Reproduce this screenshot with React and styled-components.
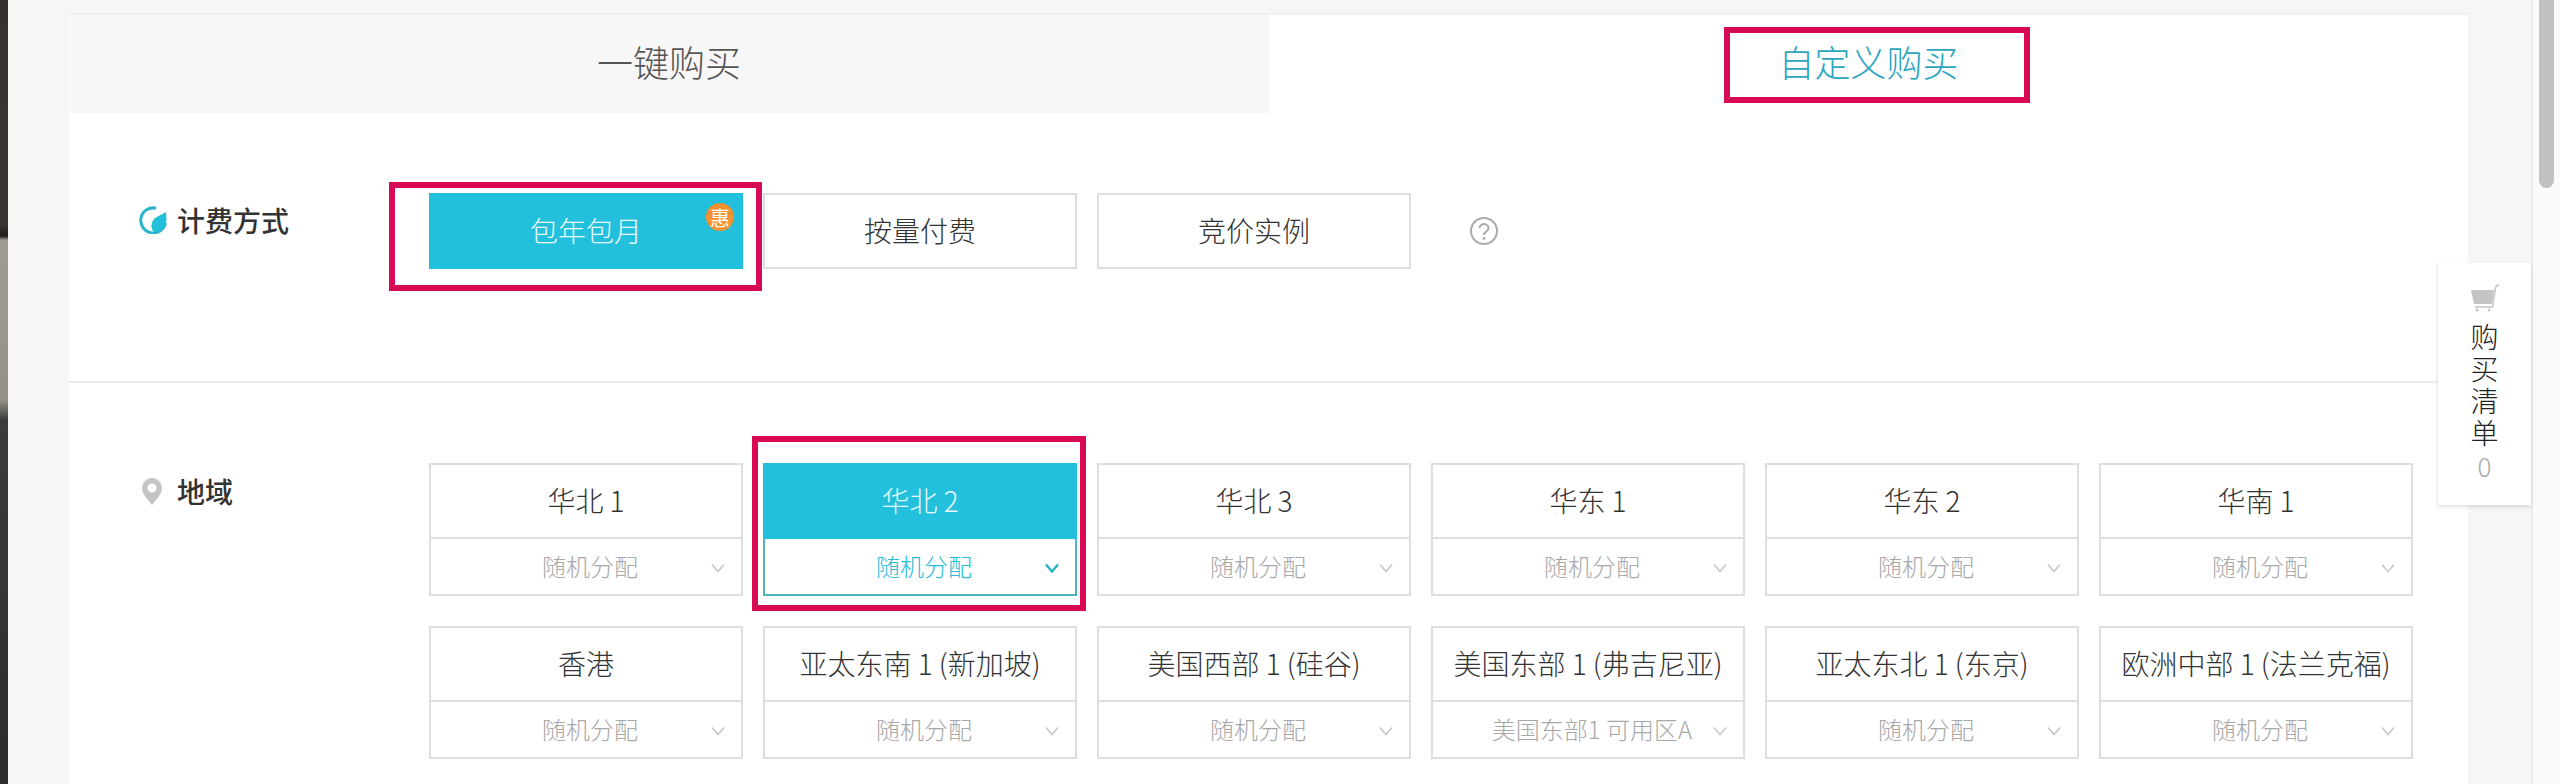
import React from 'react';
import styled, { createGlobalStyle } from 'styled-components';

const GlobalStyle = createGlobalStyle`
  html, body {
    margin: 0;
    height: 100%;
    overflow: hidden;
  }
  body {
    font-family: "Noto Sans CJK SC", "Liberation Sans", sans-serif;
    font-weight: 300;
    color: #333;
  }
`;

const Page = styled.div`
  display: flex;
  position: relative;
  height: 784px;
  overflow: hidden;
  background: #f6f6f6;
`;

const PhotoEdge = styled.div`
  flex: 0 0 8px;
  background: linear-gradient(#35322e 0, #3a3632 225px, #1f1c1a 236px, #a09b92 240px, #96918a 400px, #3c3c3c 420px, #2c2c2c 784px);
`;

const Main = styled.main`
  flex: 1;
  min-width: 0;
  padding: 13px 63px 0 61px;
`;

const Panel = styled.div`
  background: #fff;
  border-top: 2px solid #efefef;
`;

const Tabs = styled.div`
  display: grid;
  grid-template-columns: 1200px 1fr;
  height: 98px;
`;

const Tab = styled.div`
  position: relative;
  display: flex;
  align-items: center;
  justify-content: center;
  padding-bottom: 6px;
  box-sizing: border-box;
  font-size: 36px;
  color: ${(props) => (props.$active ? '#2ba6c0' : '#555')};
  background: ${(props) => (props.$active ? '#fff' : '#f7f7f7')};
`;

const Highlight = styled.div`
  position: absolute;
  top: ${(props) => props.$top}px;
  right: ${(props) => props.$right}px;
  bottom: ${(props) => props.$bottom}px;
  left: ${(props) => props.$left}px;
  border: 6px solid #d80a56;
  pointer-events: none;
`;

const Section = styled.section`
  display: flex;
  height: ${(props) => props.$height}px;
  padding-top: ${(props) => props.$top}px;
  box-sizing: border-box;
  border-bottom: ${(props) => (props.$line ? '2px solid #ededed' : 'none')};
`;

const Label = styled.div`
  flex: 0 0 360px;
  box-sizing: border-box;
  display: flex;
  align-items: center;
  align-self: flex-start;
  height: 36px;
  margin-top: ${(props) => props.$offset}px;
  padding-left: ${(props) => props.$indent}px;
  gap: ${(props) => props.$gap}px;
  font-size: 28px;
  font-weight: 500;
  color: #333;
`;

const Options = styled.div`
  display: flex;
  align-items: center;
  gap: 20px;
  height: 76px;
`;

const OptionBox = styled.div`
  position: relative;
  box-sizing: border-box;
  width: 314px;
  height: 76px;
  padding-bottom: 3px;
  display: flex;
  align-items: center;
  justify-content: center;
  font-size: 28px;
  color: ${(props) => (props.$active ? '#e8f9fc' : '#333')};
  background: ${(props) => (props.$active ? '#22c0dc' : '#fff')};
  border: ${(props) => (props.$active ? 'none' : '2px solid #dedede')};
`;

const Badge = styled.span`
  position: absolute;
  top: 10px;
  right: 9px;
  width: 28px;
  height: 28px;
  border-radius: 50%;
  display: flex;
  align-items: center;
  justify-content: center;
  font-size: 20px;
  font-weight: 400;
  color: #fff;
  background: #f2912d;
`;

const HelpIcon = styled.svg`
  width: 30px;
  height: 30px;
  margin-left: 38px;
`;

const RegionGrid = styled.div`
  display: grid;
  grid-template-columns: repeat(6, 314px);
  column-gap: 20px;
  row-gap: 30px;
  align-content: start;
`;

const RegionCard = styled.div`
  position: relative;
  box-sizing: border-box;
  height: 133px;
  display: flex;
  flex-direction: column;
`;

const RegionName = styled.div`
  flex: 0 0 76px;
  box-sizing: border-box;
  padding-bottom: 3px;
  display: flex;
  align-items: center;
  justify-content: center;
  font-size: 28px;
  white-space: pre;
  color: ${(props) => (props.$active ? '#e8f9fc' : '#333')};
  background: ${(props) => (props.$active ? '#22c0dc' : '#fff')};
  border: ${(props) => (props.$active ? 'none' : '2px solid #dedede')};
`;

const ZoneSelect = styled.div`
  flex: 1;
  position: relative;
  box-sizing: border-box;
  display: flex;
  align-items: center;
  justify-content: center;
  padding: 0 0 3px 8px;
  font-size: 24px;
  color: ${(props) => (props.$active ? '#2abcd6' : '#a8a8a8')};
  border: 2px solid ${(props) => (props.$active ? '#4db5bd' : '#dedede')};
  border-top: 0;
`;

const Chevron = styled.svg`
  position: absolute;
  right: 15px;
  top: 50%;
  width: 16px;
  height: 10px;
  margin-top: -4px;
  fill: none;
  stroke: ${(props) => (props.$active ? '#2fb4c4' : '#c8c8c8')};
  stroke-width: ${(props) => (props.$active ? 2.6 : 1.6)};
`;

const CartPanel = styled.aside`
  position: absolute;
  top: 263px;
  right: 29px;
  width: 93px;
  height: 242px;
  box-sizing: border-box;
  padding-top: 21px;
  display: flex;
  flex-direction: column;
  align-items: center;
  background: #fff;
  box-shadow: 0 2px 4px rgba(0, 0, 0, 0.12), -1px 0 2px rgba(0, 0, 0, 0.04);
`;

const CartIcon = styled.svg`
  width: 30px;
  height: 28px;
  margin-bottom: 8px;
`;

const CartText = styled.div`
  font-size: 28px;
  line-height: 32px;
  width: 28px;
  text-align: center;
  color: #222;
`;

const CartCount = styled.div`
  font-size: 26px;
  line-height: 36px;
  color: #aaa;
`;

const ScrollTrack = styled.div`
  flex: 0 0 29px;
  box-sizing: border-box;
  padding: 0 6px 0 6px;
  background: #fafafa;
  border-left: 2px solid #ececec;
`;

const ScrollThumb = styled.div`
  height: 188px;
  border-radius: 0 0 8px 8px;
  background: #c1c1c1;
`;

const billing = [
  { name: '包年包月', active: true, badge: true },
  { name: '按量付费' },
  { name: '竞价实例' },
];

const regions = [
  { name: '华北 1' },
  { name: '华北 2', active: true },
  { name: '华北 3' },
  { name: '华东 1' },
  { name: '华东 2' },
  { name: '华南 1' },
  { name: '香港' },
  { name: '亚太东南 1 (新加坡)' },
  { name: '美国西部 1 (硅谷)' },
  { name: '美国东部 1 (弗吉尼亚)', zone: '美国东部1 可用区A' },
  { name: '亚太东北 1 (东京)' },
  { name: '欧洲中部 1 (法兰克福)' },
];

function App() {
  return (
    <>
      <GlobalStyle />
      <Page>
        <PhotoEdge />
        <Main>
          <Panel>
            <Tabs>
              <Tab>一键购买</Tab>
              <Tab $active>
                自定义购买
                <Highlight $top={12} $right={438} $bottom={10} $left={455} />
              </Tab>
            </Tabs>
            <Section $height={270} $top={80} $line>
              <Label $offset={9} $indent={70} $gap={10}>
                <svg width="28" height="28" viewBox="0 0 28 28">
                  <path d="M17 2.200A12.500 12.500 0 1 0 26.500 17" fill="none" stroke="#2bb4d0" strokeWidth="3" />
                  <path d="M27 6 L27.500 14 C27 21 21 26 15 26 C11 22 12 16 16 12 Z" fill="#22c0dc" />
                </svg>
                计费方式
              </Label>
              <Options>
                {billing.map((item) => (
                  <OptionBox key={item.name} $active={item.active}>
                    {item.name}
                    {item.badge && <Badge>惠</Badge>}
                    {item.badge && <Highlight $top={-11} $right={-19} $bottom={-22} $left={-40} />}
                  </OptionBox>
                ))}
                <HelpIcon viewBox="0 0 30 30">
                  <circle cx="15" cy="15" r="13" fill="none" stroke="#aaa" strokeWidth="2" />
                  <path d="M10.500 12a4.500 4 0 1 1 7 3.300c-1.600 1-2.500 1.800-2.500 3.700" fill="none" stroke="#aaa" strokeWidth="2" />
                  <circle cx="15" cy="22.500" r="1.400" fill="#aaa" />
                </HelpIcon>
              </Options>
            </Section>
            <Section $height={420} $top={80}>
              <Label $offset={10} $indent={73} $gap={15}>
                <svg width="20" height="27" viewBox="0 0 20 27">
                  <path fillRule="evenodd" d="M10 0a10 10 0 0 1 10 10c0 6-6 12-10 17C6 22 0 16 0 10A10 10 0 0 1 10 0Zm0 5.500a4.500 4.500 0 1 0 0 9 4.500 4.500 0 0 0 0-9Z" fill="#c4c4c4" />
                </svg>
                地域
              </Label>
              <RegionGrid>
                {regions.map((region) => (
                  <RegionCard key={region.name}>
                    <RegionName $active={region.active}>{region.name}</RegionName>
                    <ZoneSelect $active={region.active}>
                      {region.zone || '随机分配'}
                      <Chevron $active={region.active} viewBox="0 0 16 10">
                        <path d="M2 1.500 8 8.500 14 1.500" />
                      </Chevron>
                    </ZoneSelect>
                    {region.active && <Highlight $top={-27} $right={-9} $bottom={-15} $left={-11} />}
                  </RegionCard>
                ))}
              </RegionGrid>
            </Section>
          </Panel>
        </Main>
        <ScrollTrack>
          <ScrollThumb />
        </ScrollTrack>
        <CartPanel>
          <CartIcon viewBox="0 0 30 28">
            <path d="M1 6h23l-2 14H4Z" fill="#c4c4c4" />
            <path d="M29 1c-2 0-3 1-3.500 3L22.500 23H5" fill="none" stroke="#c4c4c4" strokeWidth="1.600" />
            <circle cx="7" cy="26" r="1.500" fill="#c4c4c4" />
            <circle cx="19" cy="26" r="1.500" fill="#c4c4c4" />
          </CartIcon>
          <CartText>购买清单</CartText>
          <CartCount>0</CartCount>
        </CartPanel>
      </Page>
    </>
  );
}

export default App;
